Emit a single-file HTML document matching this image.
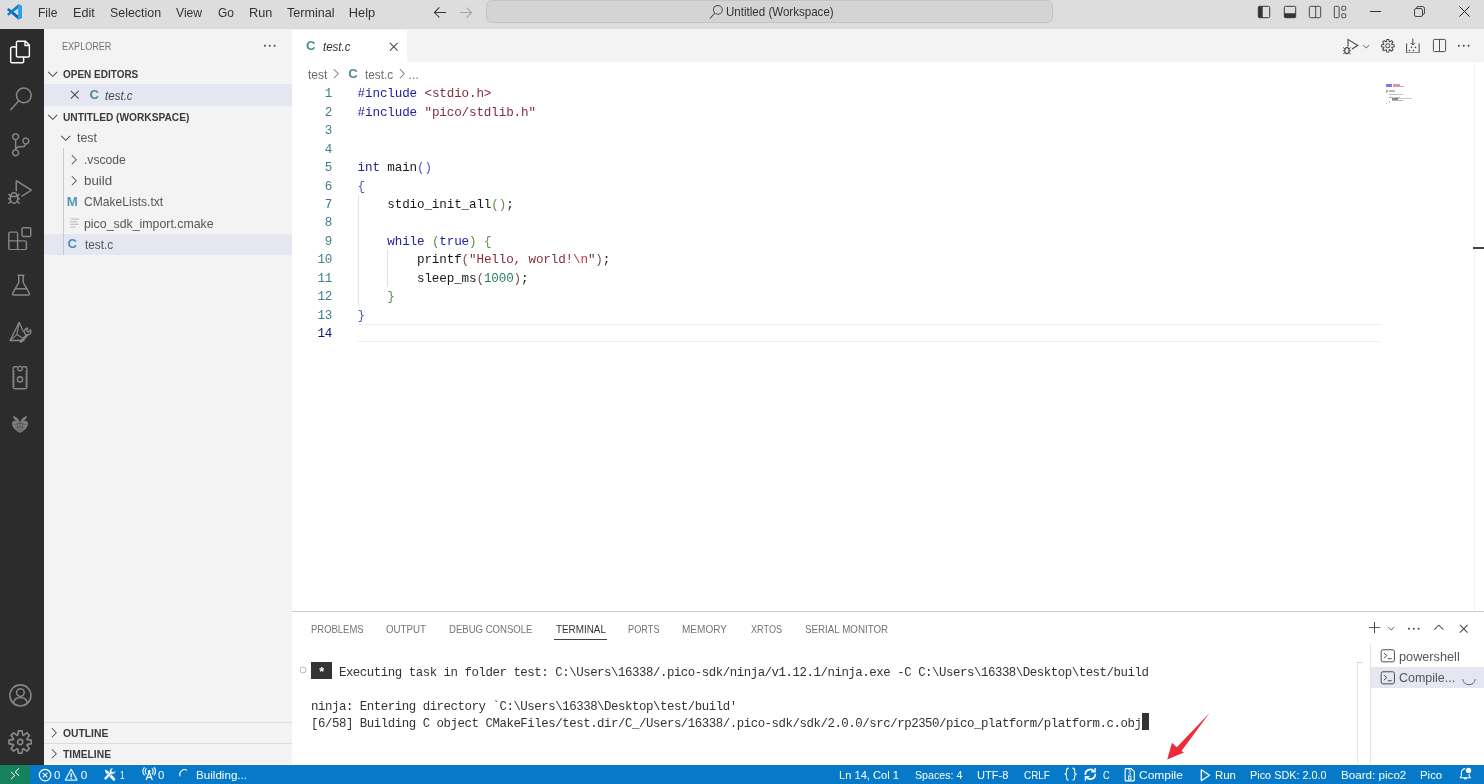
<!DOCTYPE html>
<html lang="en"><head><meta charset="utf-8"><title>test.c - Untitled (Workspace) - Visual Studio Code</title>
<style>

html,body{margin:0;padding:0;background:#fff;}
body{width:1484px;height:784px;overflow:hidden;font-family:'Liberation Sans',sans-serif;}
#app{position:relative;width:1484px;height:784px;overflow:hidden;background:#fff;filter:blur(0.35px);}
#app div,#app span,#app svg{position:absolute;}
.t{white-space:pre;line-height:1;transform-origin:0 50%;font-family:'Liberation Sans',sans-serif;}
.m{font-family:'Liberation Mono',monospace;}
.cl{white-space:pre;font-family:'Liberation Mono',monospace;font-size:12.6px;line-height:1;letter-spacing:-0.13px;color:#1a1a1a;left:357.6px;}
.cl span{position:static !important;}
.ln{white-space:pre;font-family:'Liberation Mono',monospace;font-size:12.6px;line-height:1;letter-spacing:-0.13px;color:#3d7f8c;text-align:right;width:30px;left:302.3px;}
.tl{white-space:pre;font-family:'Liberation Mono',monospace;font-size:12.4px;line-height:1;letter-spacing:-0.457px;color:#333;left:311px;}
.tl span{position:static !important;}
.k{color:#2420a2}.s{color:#842d3b}.e{color:#c8323c}.n{color:#2a7d5c}
.b1{color:#4858b8}.b2{color:#5a9048}.b3{color:#7a5240}

</style></head>
<body>
<div id="app">
<div style="left:0px;top:0px;width:1484px;height:29px;background:#dddddd;"></div>
<div style="left:486px;top:-0.3px;width:565px;height:21.6px;background:#d4d4d4;border:1px solid #c4c4c4;border-radius:6px;"></div>
<div style="left:0px;top:28.8px;width:43.5px;height:736px;background:#2c2c2c;"></div>
<div style="left:43.5px;top:29px;width:248.5px;height:735.4px;background:#f3f3f3;"></div>
<div style="left:44px;top:84.3px;width:248px;height:21.7px;background:#e4e6f1;"></div>
<div style="left:44px;top:233.8px;width:248px;height:21px;background:#e4e6f1;"></div>
<div style="left:63px;top:148px;width:1px;height:107px;background:#c9c9c9;"></div>
<div style="left:44px;top:722.3px;width:248px;height:1px;background:#dcdcdc;"></div>
<div style="left:44px;top:743.2px;width:248px;height:1px;background:#dcdcdc;"></div>
<div style="left:292px;top:29px;width:1192px;height:32.6px;background:#f3f3f3;"></div>
<div style="left:292px;top:29.6px;width:115.3px;height:32.4px;background:#ffffff;"></div>
<div style="left:1473.5px;top:62px;width:1px;height:549px;background:#f2f2f2;"></div>
<div style="left:1473px;top:247px;width:11px;height:2px;background:#424242;"></div>
<div style="left:358px;top:324px;width:1022px;height:1.2px;background:#eeeeee;"></div>
<div style="left:358px;top:340.6px;width:1022px;height:1.2px;background:#eeeeee;"></div>
<div style="left:358px;top:194.5px;width:1px;height:111px;background:#e2e2e2;"></div>
<div style="left:387.4px;top:250px;width:1px;height:37px;background:#e2e2e2;"></div>
<div style="left:292px;top:610.5px;width:1192px;height:1px;background:#cbcbcb;"></div>
<div style="left:554px;top:639px;width:53px;height:1px;background:#424242;"></div>
<div style="left:1369.5px;top:644px;width:1px;height:120.4px;background:#e3e3e3;"></div>
<div style="left:1370.5px;top:667px;width:113.5px;height:21px;background:#e4e6f1;"></div>
<div style="left:1356.5px;top:663px;width:1px;height:101.4px;background:#e9e9e9;"></div>
<div style="left:1357px;top:662px;width:5px;height:1px;background:#d0d0d0;"></div>
<div style="left:310.8px;top:661.9px;width:21.2px;height:16.9px;background:#333333;"></div>
<div style="left:1142px;top:713.3px;width:6.7px;height:17px;background:#333333;"></div>
<div style="left:0px;top:764.7px;width:1484px;height:19.3px;background:#0679c9;"></div>
<div style="left:0px;top:764.7px;width:30.2px;height:19.3px;background:#16825d;"></div>
<div class="ln" style="top:88.00px">1</div>
<div class="cl" style="top:88.00px"><span class="k">#include</span> <span class="s">&lt;stdio.h&gt;</span></div>
<div class="ln" style="top:107.00px">2</div>
<div class="cl" style="top:107.00px"><span class="k">#include</span> <span class="s">"pico/stdlib.h"</span></div>
<div class="ln" style="top:125.00px">3</div>
<div class="ln" style="top:144.00px">4</div>
<div class="ln" style="top:162.00px">5</div>
<div class="cl" style="top:162.00px"><span class="k">int</span> main<span class="b1">()</span></div>
<div class="ln" style="top:181.00px">6</div>
<div class="cl" style="top:181.00px"><span class="b1">{</span></div>
<div class="ln" style="top:199.00px">7</div>
<div class="cl" style="top:199.00px">    stdio_init_all<span class="b2">()</span>;</div>
<div class="ln" style="top:217.00px">8</div>
<div class="ln" style="top:236.00px">9</div>
<div class="cl" style="top:236.00px">    <span class="k">while</span> <span class="b2">(</span><span class="k">true</span><span class="b2">)</span> <span class="b2">{</span></div>
<div class="ln" style="top:254.00px">10</div>
<div class="cl" style="top:254.00px">        printf<span class="b3">(</span><span class="s">"Hello, world!</span><span class="e">\n</span><span class="s">"</span><span class="b3">)</span>;</div>
<div class="ln" style="top:273.00px">11</div>
<div class="cl" style="top:273.00px">        sleep_ms<span class="b3">(</span><span class="n">1000</span><span class="b3">)</span>;</div>
<div class="ln" style="top:291.00px">12</div>
<div class="cl" style="top:291.00px">    <span class="b2">}</span></div>
<div class="ln" style="top:310.00px">13</div>
<div class="cl" style="top:310.00px"><span class="b1">}</span></div>
<div class="ln" style="top:328.00px;color:#0b216f">14</div>
<div class="tl" style="top:667.00px"><span style="color:#fff;font-weight:700"> * </span> Executing task in folder test: C:\Users\16338/.pico-sdk/ninja/v1.12.1/ninja.exe -C C:\Users\16338\Desktop\test/build </div>
<div class="tl" style="top:701.00px">ninja: Entering directory `C:\Users\16338\Desktop\test/build'</div>
<div class="tl" style="top:718.00px">[6/58] Building C object CMakeFiles/test.dir/C_/Users/16338/.pico-sdk/sdk/2.0.0/src/rp2350/pico_platform/platform.c.obj</div>
<div style="left:1386px;top:84.1px;width:6px;height:2.9px;background:#5a5ae0;opacity:0.8"></div>
<div style="left:1393.4px;top:84.1px;width:6.6px;height:2.9px;background:#d06a80;opacity:0.7"></div>
<div style="left:1400.3px;top:85.6px;width:3.4px;height:1.2px;background:#999;opacity:0.7"></div>
<div style="left:1386px;top:90.44px;width:2.2px;height:1.3px;background:#666;opacity:0.55"></div>
<div style="left:1389px;top:90.44px;width:5.5px;height:1.3px;background:#777;opacity:0.5"></div>
<div style="left:1386px;top:92.0px;width:0.8px;height:1.3px;background:#777;opacity:0.5"></div>
<div style="left:1389.2px;top:93.56px;width:13.5px;height:1.2px;background:#888;opacity:0.5"></div>
<div style="left:1389.2px;top:96.68px;width:3.8px;height:1.2px;background:#6666cc;opacity:0.6"></div>
<div style="left:1393.7px;top:96.68px;width:6px;height:1.2px;background:#7a7ad0;opacity:0.55"></div>
<div style="left:1392.3px;top:98.24px;width:5.5px;height:1.4px;background:#555;opacity:0.7"></div>
<div style="left:1398px;top:98.24px;width:13.8px;height:1.2px;background:#8a7070;opacity:0.4"></div>
<div style="left:1392.3px;top:99.8px;width:11.2px;height:1.3px;background:#777;opacity:0.55"></div>
<div style="left:1389.2px;top:101.36px;width:0.8px;height:1.3px;background:#777;opacity:0.5"></div>
<div style="left:1386px;top:102.92px;width:0.8px;height:1.3px;background:#777;opacity:0.5"></div>
<svg style="left:5.5px;top:4px;" width="16.8" height="15.8" viewBox="0 0 100 100"><polygon points="13,26 76,75 76,100 3,37" fill="#0a6ab4"/><polygon points="13,74 76,25 76,0 3,63" fill="#1180cf"/><polygon points="74,0 100,12 100,88 74,100" fill="#2a9fea"/></svg>
<svg style="left:432px;top:3.8px;" width="16" height="16" viewBox="0 0 16 16"><path d="M7 3.093l-5 5V8.8l5 5 .707-.707-4.146-4.147H14v-1H3.56L7.707 3.8 7 3.093z" fill="#333"/></svg>
<svg style="left:458px;top:3.8px;" width="16" height="16" viewBox="0 0 16 16"><path d="M9 13.887l5-5V8.18l-5-5-.707.707 4.146 4.147H2v1h10.44L8.293 13.18l.707.707z" fill="#a4a4a4"/></svg>
<svg style="left:708.5px;top:4.5px;" width="14" height="14" viewBox="0 0 24 24"><path d="M15.25 0a8.25 8.25 0 0 0-6.18 13.72L1 22.88l1.12 1 8.05-9.12A8.251 8.251 0 1 0 15.25.01V0zm0 15a6.75 6.75 0 1 1 0-13.5 6.75 6.75 0 0 1 0 13.5z" fill="#444"/></svg>
<svg style="left:1257px;top:4.8px;" width="14" height="14" viewBox="0 0 16 16"><rect x="1.5" y="1.5" width="13" height="13" rx="1.5" fill="none" stroke="#333" stroke-width="1.1"/><path d="M1.5 3 a1.5 1.5 0 0 1 1.5-1.5 h3.5 v13 h-3.5 a1.5 1.5 0 0 1-1.5-1.5z" fill="#333"/></svg>
<svg style="left:1282.5px;top:4.8px;" width="14" height="14" viewBox="0 0 16 16"><rect x="1.5" y="1.5" width="13" height="13" rx="1.5" fill="none" stroke="#333" stroke-width="1.1"/><path d="M1.5 9.5 h13 v3.5 a1.5 1.5 0 0 1-1.5 1.5 h-10 a1.5 1.5 0 0 1-1.5-1.5z" fill="#333"/></svg>
<svg style="left:1307.7px;top:4.8px;" width="14" height="14" viewBox="0 0 16 16"><rect x="1.5" y="1.5" width="13" height="13" rx="1.5" fill="none" stroke="#444" stroke-width="1.1"/><path d="M8.8 1.5v13" stroke="#444" stroke-width="1.1"/></svg>
<svg style="left:1333.3px;top:4.8px;" width="14" height="14" viewBox="0 0 16 16"><rect x="1.5" y="1.5" width="5.5" height="13" rx="1" fill="none" stroke="#444" stroke-width="1.1"/><rect x="10" y="1.5" width="4.5" height="4.5" rx="1" fill="none" stroke="#444" stroke-width="1.1"/><rect x="10" y="10" width="4.5" height="4.5" rx="1" fill="none" stroke="#444" stroke-width="1.1"/></svg>
<div style="left:1370px;top:11px;width:10.6px;height:1px;background:#333"></div>
<svg style="left:1413.5px;top:6px;" width="11" height="11" viewBox="0 0 11 11"><rect x="0.5" y="2.5" width="8" height="8" rx="1.6" fill="none" stroke="#333" stroke-width="0.9"/><path d="M2.6 2.3 V2 a1.5 1.5 0 0 1 1.5-1.5 h4.4 a2 2 0 0 1 2 2 v4.4 a1.5 1.5 0 0 1-1.5 1.5 h-0.3" fill="none" stroke="#333" stroke-width="0.9"/></svg>
<svg style="left:1458.5px;top:6.3px;" width="11" height="11" viewBox="0 0 11 11"><path d="M0.4 0.4 L10.6 10.6 M10.6 0.4 L0.4 10.6" stroke="#222" stroke-width="1"/></svg>
<svg style="left:8.6px;top:40px;" width="23" height="24" viewBox="0 0 24 24"><path d="M17.5 0h-9L7 1.5V6H2.5L1 7.500v15.070L2.500 24h12.070L16 22.570V18h4.700l1.300-1.430V4.500L17.500 0zm0 2.120l2.380 2.380H17.500V2.120zm-3 20.380h-12v-15H7v9.070L8.500 18h6v4.500zm6-6h-12v-15H16V6h4.500v10.500z" fill="#ffffff"/></svg>
<svg style="left:8.6px;top:86.6px;" width="23.4" height="24" viewBox="0 0 24 24"><path d="M15.25 0a8.25 8.25 0 0 0-6.18 13.72L1 22.88l1.12 1 8.05-9.12A8.251 8.251 0 1 0 15.25.01V0zm0 15a6.75 6.75 0 1 1 0-13.5 6.75 6.75 0 0 1 0 13.5z" fill="#868686"/></svg>
<svg style="left:8.6px;top:133.3px;" width="23.4" height="23.4" viewBox="0 0 24 24"><path d="M21.007 8.222A3.738 3.738 0 0 0 15.045 5.200a3.737 3.737 0 0 0 1.156 6.583 2.988 2.988 0 0 1-2.668 1.670h-2.990a4.456 4.456 0 0 0-2.989 1.165V7.400a3.737 3.737 0 1 0-1.494 0v9.117a3.776 3.776 0 1 0 1.816.099 2.990 2.990 0 0 1 2.668-1.667h2.990a4.484 4.484 0 0 0 4.223-3.039 3.736 3.736 0 0 0 3.250-3.687zM4.565 3.738a2.242 2.242 0 1 1 4.484 0 2.242 2.242 0 0 1-4.484 0zm4.484 16.441a2.242 2.242 0 1 1-4.484 0 2.242 2.242 0 0 1 4.484 0zm8.221-9.715a2.242 2.242 0 1 1 0-4.485 2.242 2.242 0 0 1 0 4.485z" fill="#868686"/></svg>
<svg style="left:8.4px;top:180.2px;" width="24" height="24" viewBox="0 0 24 24"><path d="M10.940 13.500l-1.320 1.320a3.730 3.730 0 0 0-7.240 0L1.060 13.500 0 14.560l1.720 1.720-.220.220V18H0v1.500h1.500v.080c.077.489.214.966.410 1.420L0 22.940 1.060 24l1.650-1.650A4.308 4.308 0 0 0 6 24a4.310 4.310 0 0 0 3.290-1.650L10.940 24 12 22.940 10.090 21c.198-.464.336-.951.410-1.450v-.100H12V18h-1.500v-1.500l-.220-.220L12 14.560l-1.060-1.060zM6 13.500a2.250 2.250 0 0 1 2.250 2.250h-4.500A2.250 2.250 0 0 1 6 13.500zm3 6a3.330 3.330 0 0 1-3 3 3.330 3.330 0 0 1-3-3v-2.250h6v2.250zm14.760-9.900v1.260L13.500 17.370V15.600l8.500-5.370L9 2v9.460a5.070 5.070 0 0 0-1.500-.720V.630L8.640 0l15.120 9.600z" fill="#868686"/></svg>
<svg style="left:8.4px;top:227px;" width="23.6" height="23.4" viewBox="0 0 24 24"><path d="M13.500 1.500L15 0h7.500L24 1.500V9l-1.500 1.500H15L13.500 9V1.500zm1.500 0V9h7.500V1.500H15zM0 15V6l1.500-1.500H9L10.500 6v7.500H18l1.500 1.500v7.500L18 24H1.500L0 22.500V15zm9-1.500V6H1.500v7.500H9zM9 15H1.500v7.500H9V15zm1.500 7.500H18V15h-7.500v7.500z" fill="#868686"/></svg>
<svg style="left:8.8px;top:273.3px;" width="24" height="24" viewBox="0 0 24 24"><path d="M8.5 2.2h7M9.8 2.2v7.3L3.6 20.4a1 1 0 0 0 .9 1.5h15a1 1 0 0 0 .9-1.500L14.200 9.500V2.200" fill="none" stroke="#868686" stroke-width="1.5" stroke-linejoin="round"/><path d="M6.300 15.800h11.400" stroke="#868686" stroke-width="1.500"/></svg>
<svg style="left:8.2px;top:319.6px;" width="24.5" height="24" viewBox="0 0 24 24"><path d="M11 2.300L1.800 20.500h14.500" fill="none" stroke="#868686" stroke-width="1.400" stroke-linejoin="round"/><path d="M11 2.300l4.200 9.600M11 2.300L8.600 14.600 1.800 20.500M8.600 14.600l5.500 3.200" fill="none" stroke="#868686" stroke-width="1.200" stroke-linejoin="round"/><path d="M12.500 21.500l6.300-6.300" stroke="#868686" stroke-width="2.600" stroke-linecap="round"/><path d="M22.300 9.800a3.400 3.400 0 1 1-2.700-1.700l-1.300 2.500 1.800 1.500z" fill="none" stroke="#868686" stroke-width="1.300" stroke-linejoin="round"/></svg>
<svg style="left:8.1px;top:365.3px;" width="24" height="24.5" viewBox="0 0 24 24.500"><path d="M9.400 1.800H6.800a1.600 1.600 0 0 0-1.600 1.600v18.700a1.600 1.600 0 0 0 1.600 1.600h10.400a1.600 1.600 0 0 0 1.600-1.600V3.400a1.600 1.600 0 0 0-1.600-1.600h-2.600" fill="none" stroke="#868686" stroke-width="1.400"/><circle cx="12" cy="3.600" r="2.300" fill="none" stroke="#868686" stroke-width="1.300"/><circle cx="12" cy="14.400" r="2.600" fill="none" stroke="#868686" stroke-width="1.400"/><path d="M5.200 7h1.800M5.200 9.400h1.800M5.200 11.800h1.800M5.200 14.200h1.800M5.200 16.600h1.800M5.200 19h1.800M5.200 21.400h1.800M17 7h1.800M17 9.400h1.800M17 11.800h1.800M17 14.200h1.800M17 16.600h1.800M17 19h1.800M17 21.400h1.800" stroke="#868686" stroke-width="0.900"/></svg>
<svg style="left:8.1px;top:412px;" width="24" height="24" viewBox="0 0 24 24"><path d="M12 20.900C9 19.600 4.300 16.400 3.900 11.600 3.800 9.600 5.800 8.500 7.900 8.800 9.900 9.100 11 9.700 12 9.700s2.100-.600 4.100-.900c2.100-.300 4.100.800 4 2.800C19.700 16.400 15 19.600 12 20.900z" fill="#7e7e7e"/><path d="M11.700 9.600C10.700 7 8.300 4.600 5 4c.300 3 2.500 5.400 6.700 5.600zM12.300 9.600C13.300 7 15.700 4.600 19 4c-.300 3-2.500 5.400-6.700 5.600z" fill="#7e7e7e"/><path d="M6.500 12.500l5.500-1.200 5.500 1.200M7.500 15.800l4.500-1.200 4.500 1.200M12 10v10.500M9.200 11.500l.8 7.500M14.800 11.500l-.8 7.500" stroke="#2c2c2c" stroke-width="0.600" fill="none" opacity="0.650"/></svg>
<svg style="left:7.9px;top:682.8px;" width="24.8" height="24.8" viewBox="0 0 24 24"><circle cx="12" cy="12" r="10.200" fill="none" stroke="#868686" stroke-width="1.500"/><circle cx="12" cy="9.300" r="3.700" fill="none" stroke="#868686" stroke-width="1.500"/><path d="M5.300 19.600c.600-3.400 3.300-5.500 6.700-5.500s6.100 2.100 6.700 5.500" fill="none" stroke="#868686" stroke-width="1.500"/></svg>
<svg style="left:8px;top:729.5px;" width="24.4" height="24" viewBox="0 0 24 24"><path d="M19.850 8.750l4.150.830v4.840l-4.150.830 2.350 3.520-3.430 3.430-3.520-2.350-.830 4.150H9.580l-.830-4.150-3.520 2.350-3.430-3.430 2.350-3.520L0 14.420V9.580l4.150-.830L1.800 5.230 5.230 1.800l3.520 2.350L9.580 0h4.840l.830 4.150 3.520-2.350 3.430 3.430-2.350 3.520zm-1.570 5.070l4-.810v-2l-4-.810-.540-1.300 2.290-3.430-1.430-1.430-3.430 2.290-1.300-.540-.810-4h-2l-.810 4-1.300.540-3.430-2.290-1.430 1.430L6.380 8.900l-.540 1.300-4 .810v2l4 .810.540 1.300-2.290 3.430 1.430 1.430 3.430-2.290 1.300.540.810 4h2l.810-4 1.300-.540 3.430 2.290 1.430-1.430-2.290-3.430.540-1.300zm-8.186-4.672A3.430 3.430 0 0 1 12 8.570 3.440 3.440 0 0 1 15.430 12a3.430 3.430 0 1 1-5.336-2.852zm.956 4.274c.281.188.612.288.950.288A1.700 1.700 0 0 0 13.710 12a1.710 1.710 0 1 0-2.660 1.422z" fill="#868686"/></svg>
<svg style="left:261.7px;top:38.2px;" width="15.5" height="15.5" viewBox="0 0 16 16"><path d="M4 8a1 1 0 1 1-2 0 1 1 0 0 1 2 0zm5 0a1 1 0 1 1-2 0 1 1 0 0 1 2 0zm5 0a1 1 0 1 1-2 0 1 1 0 0 1 2 0z" fill="#424242"/></svg>
<svg style="left:45.4px;top:66.3px;" width="15.5" height="15.5" viewBox="0 0 16 16"><path d="M7.976 10.072l4.357-4.357.62.618L8.284 11h-.618L3 6.333l.619-.618 4.357 4.357z" fill="#424242"/></svg>
<svg style="left:45.4px;top:109px;" width="15.5" height="15.5" viewBox="0 0 16 16"><path d="M7.976 10.072l4.357-4.357.62.618L8.284 11h-.618L3 6.333l.619-.618 4.357 4.357z" fill="#424242"/></svg>
<svg style="left:58.2px;top:130.3px;" width="15.5" height="15.5" viewBox="0 0 16 16"><path d="M7.976 10.072l4.357-4.357.62.618L8.284 11h-.618L3 6.333l.619-.618 4.357 4.357z" fill="#424242"/></svg>
<svg style="left:66.2px;top:151.6px;" width="15.5" height="15.5" viewBox="0 0 16 16"><path d="M10.072 8.024L5.715 3.667l.618-.62L11 7.716v.618L6.333 13l-.618-.619 4.357-4.357z" fill="#424242"/></svg>
<svg style="left:66.2px;top:173px;" width="15.5" height="15.5" viewBox="0 0 16 16"><path d="M10.072 8.024L5.715 3.667l.618-.62L11 7.716v.618L6.333 13l-.618-.619 4.357-4.357z" fill="#424242"/></svg>
<svg style="left:45.6px;top:725px;" width="15.5" height="15.5" viewBox="0 0 16 16"><path d="M10.072 8.024L5.715 3.667l.618-.62L11 7.716v.618L6.333 13l-.618-.619 4.357-4.357z" fill="#424242"/></svg>
<svg style="left:45.6px;top:746.3px;" width="15.5" height="15.5" viewBox="0 0 16 16"><path d="M10.072 8.024L5.715 3.667l.618-.62L11 7.716v.618L6.333 13l-.618-.619 4.357-4.357z" fill="#424242"/></svg>
<svg style="left:66.8px;top:87.4px;" width="15.5" height="15.5" viewBox="0 0 16 16"><path d="M8 8.707l3.646 3.647.708-.707L8.707 8l3.647-3.646-.707-.708L8 7.293 4.354 3.646l-.707.708L7.293 8l-3.646 3.646.707.708L8 8.707z" fill="#424242"/></svg>
<svg style="left:385.7px;top:38.7px;" width="15.5" height="15.5" viewBox="0 0 16 16"><path d="M8 8.707l3.646 3.647.708-.707L8.707 8l3.647-3.646-.707-.708L8 7.293 4.354 3.646l-.707.708L7.293 8l-3.646 3.646.707.708L8 8.707z" fill="#424242"/></svg>
<svg style="left:327.8px;top:66.3px;" width="15.5" height="15.5" viewBox="0 0 16 16"><path d="M10.072 8.024L5.715 3.667l.618-.62L11 7.716v.618L6.333 13l-.618-.619 4.357-4.357z" fill="#6c6c6c"/></svg>
<svg style="left:393.5px;top:66.3px;" width="15.5" height="15.5" viewBox="0 0 16 16"><path d="M10.072 8.024L5.715 3.667l.618-.62L11 7.716v.618L6.333 13l-.618-.619 4.357-4.357z" fill="#6c6c6c"/></svg>
<svg style="left:69.5px;top:217.5px;" width="10" height="10" viewBox="0 0 10 10"><path d="M0.300 1h8.700M0.300 3.700h6.800M0.300 6.300h8.700M0.300 9h5.300" stroke="#b9b9b9" stroke-width="1.100"/></svg>
<svg style="left:1341.5px;top:37.5px;" width="17" height="17" viewBox="0 0 16 16"><path d="M5.650 8.300V1.300L14.800 7l-5.400 3.400" fill="none" stroke="#424242" stroke-width="1" stroke-linejoin="miter"/><ellipse cx="4.660" cy="11.800" rx="2.050" ry="2.900" fill="none" stroke="#424242" stroke-width="1"/><path d="M2.700 10.200L1.100 9M6.600 10.200l1.600-1.200M2.600 12H0.900M6.700 12h1.700M2.900 13.700l-1.700 1.300M6.400 13.700l1.700 1.300" stroke="#424242" stroke-width="0.900"/></svg>
<svg style="left:1360.7px;top:40.7px;" width="10.5" height="10.5" viewBox="0 0 16 16"><path d="M7.976 10.072l4.357-4.357.62.618L8.284 11h-.618L3 6.333l.619-.618 4.357 4.357z" fill="#555"/></svg>
<svg style="left:1380.4px;top:38.2px;" width="15.6" height="15.6" viewBox="0 0 16 16"><path d="M9.100 4.400L8.600 2H7.400l-.500 2.400-.700.300-2-1.300-.900.800 1.300 2-.200.700-2.400.500v1.200l2.400.500.300.800-1.300 2 .800.800 2-1.300.800.300.400 2.300h1.200l.500-2.400.800-.300 2 1.300.800-.800-1.300-2 .300-.800 2.300-.400V7.400l-2.400-.500-.300-.800 1.300-2-.800-.800-2 1.300-.700-.200zM9.400 1l.500 2.400L12 2.100l2 2-1.400 2.100 2.400.400v2.800l-2.400.500L14 12l-2 2-2.100-1.400-.500 2.400H6.600l-.500-2.400L4 13.900l-2-2 1.400-2.100L1 9.400V6.600l2.400-.500L2.100 4l2-2 2.100 1.400.400-2.400h2.800zm.600 7c0 1.100-.900 2-2 2s-2-.900-2-2 .900-2 2-2 2 .900 2 2zM8 9c.600 0 1-.400 1-1s-.400-1-1-1-1 .400-1 1 .400 1 1 1z" fill="#424242"/><circle cx="8" cy="8" r="2.100" fill="#f3f3f3" stroke="#424242" stroke-width="1"/></svg>
<svg style="left:1404.7px;top:37.6px;" width="15.6" height="15.6" viewBox="0 0 16 16"><path d="M1.650 5.600v9.700h12.800V5.600M8 0.600v6.600M5.700 4.900L8 7.200l2.300-2.300" fill="none" stroke="#424242" stroke-width="1"/><circle cx="6.700" cy="9.600" r="0.850" fill="#424242"/><circle cx="10.700" cy="9.600" r="0.850" fill="#424242"/><circle cx="4.600" cy="12.800" r="0.850" fill="#424242"/><circle cx="8.600" cy="12.800" r="0.850" fill="#424242"/></svg>
<svg style="left:1431.6px;top:38px;" width="15" height="15" viewBox="0 0 16 16"><rect x="1.500" y="1.500" width="13" height="13" rx="1.200" fill="none" stroke="#424242" stroke-width="1"/><path d="M8 1.500v13" stroke="#424242" stroke-width="1"/></svg>
<svg style="left:1456.2px;top:38.2px;" width="15.5" height="15.5" viewBox="0 0 16 16"><path d="M4 8a1 1 0 1 1-2 0 1 1 0 0 1 2 0zm5 0a1 1 0 1 1-2 0 1 1 0 0 1 2 0zm5 0a1 1 0 1 1-2 0 1 1 0 0 1 2 0z" fill="#424242"/></svg>
<span class="t" style="left:306px;top:39.3px;font-size:13.2px;font-weight:700;color:#4f8d96">C</span>
<span class="t" style="left:348.2px;top:67.3px;font-size:13.2px;font-weight:700;color:#4f8d96">C</span>
<span class="t" style="left:89.4px;top:87.7px;font-size:13.2px;font-weight:700;color:#4f8d96">C</span>
<span class="t" style="left:67.5px;top:237.3px;font-size:13.2px;font-weight:700;color:#4f8fb3">C</span>
<span class="t" style="left:66.7px;top:194.7px;font-size:13.2px;font-weight:700;color:#4f9ab8">M</span>
<svg style="left:1368.4px;top:621.2px;" width="14" height="14" viewBox="0 0 16 16"><path d="M14 7v1H8v6H7V8H1V7h6V1h1v6h6z" fill="#333"/></svg>
<svg style="left:1385.8px;top:623.3px;" width="10.5" height="10.5" viewBox="0 0 16 16"><path d="M7.976 10.072l4.357-4.357.62.618L8.284 11h-.618L3 6.333l.619-.618 4.357 4.357z" fill="#555"/></svg>
<svg style="left:1405.9px;top:620.7px;" width="15.5" height="15.5" viewBox="0 0 16 16"><path d="M4 8a1 1 0 1 1-2 0 1 1 0 0 1 2 0zm5 0a1 1 0 1 1-2 0 1 1 0 0 1 2 0zm5 0a1 1 0 1 1-2 0 1 1 0 0 1 2 0z" fill="#424242"/></svg>
<svg style="left:1430.9px;top:620.2px;" width="15.5" height="15.5" viewBox="0 0 16 16"><path d="M8.024 5.928l-4.357 4.357-.62-.618L7.716 5h.618L13 9.667l-.619.618-4.357-4.357z" fill="#424242"/></svg>
<svg style="left:1456px;top:620.6px;" width="15.5" height="15.5" viewBox="0 0 16 16"><path d="M8 8.707l3.646 3.647.708-.707L8.707 8l3.647-3.646-.707-.708L8 7.293 4.354 3.646l-.707.708L7.293 8l-3.646 3.646.707.708L8 8.707z" fill="#424242"/></svg>
<svg style="left:1380px;top:648.3px;" width="15.6" height="15.6" viewBox="0 0 16 16"><rect x="1.200" y="1.800" width="13.600" height="12.400" rx="1.800" fill="none" stroke="#4a4a4a" stroke-width="1"/><path d="M4 5.200l3 2.600-3 2.600M8 11h4" fill="none" stroke="#4a4a4a" stroke-width="1"/></svg>
<svg style="left:1380px;top:669.8px;" width="15.6" height="15.6" viewBox="0 0 16 16"><rect x="1.200" y="1.800" width="13.600" height="12.400" rx="1.800" fill="none" stroke="#4a4a4a" stroke-width="1"/><path d="M4 5.200l3 2.600-3 2.600M8 11h4" fill="none" stroke="#4a4a4a" stroke-width="1"/></svg>
<svg style="left:1461px;top:671px;" width="16" height="16" viewBox="0 0 16 16"><path d="M1.800 8.500a6.300 6.300 0 0 0 12.400 0" fill="none" stroke="#666" stroke-width="1" stroke-linecap="round"/></svg>
<svg style="left:298.5px;top:666px;" width="8" height="8" viewBox="0 0 8 8"><circle cx="4" cy="4" r="3" fill="none" stroke="#b8b8b8" stroke-width="1"/></svg>
<svg style="left:1160px;top:705px;" width="60" height="60" viewBox="0 0 60 60"><polygon points="7.200,54.500 12,37.800 16.800,42.200 49.500,8 21.500,46 24,47.600" fill="#ee2b3a"/></svg>
<svg style="left:7.5px;top:767px;" width="14" height="14" viewBox="0 0 16 16"><path d="M12.904 9.570L8.928 5.596l3.976-3.976-.619-.620L8 5.286v.619l4.285 4.285.619-.620zM3 5.620l4.072 4.050L3 13.745l.619.619L8 9.980v-.620L3.619 5 3 5.620z" fill="#ffffff"/></svg>
<svg style="left:37.6px;top:768px;" width="14.2" height="14.2" viewBox="0 0 16 16"><circle cx="8" cy="8" r="6.500" fill="none" stroke="#fff" stroke-width="1.350"/><path d="M5.400 5.400l5.200 5.200M10.600 5.400l-5.200 5.200" stroke="#fff" stroke-width="1.300"/></svg>
<svg style="left:64px;top:767.8px;" width="14.4" height="14.4" viewBox="0 0 16 16"><path d="M7.560 1h.880l6.540 12.260-.440.740H1.440L1 13.260 7.560 1zM8 2.280L2.280 13H13.700L8 2.280zM8.625 12v-1h-1.250v1h1.250zm-1.250-2V6h1.250v4h-1.250z" fill="#fff" stroke="#fff" stroke-width="0.350"/></svg>
<svg style="left:102.8px;top:767.6px;" width="14.2" height="14.2" viewBox="0 0 16 16"><path d="M2 1.800l3.200 1.200 8.200 8.600a1.600 1.600 0 0 1-2.300 2.300L2.900 5.200z" fill="#fff"/><path d="M14 2.500a3.500 3.500 0 0 1-4.500 4.300L4.300 12.800a1.700 1.700 0 0 1-2.500-2.400L7.400 4.800a3.500 3.500 0 0 1 4.300-4.500L9.800 2.500l.5 1.700 1.700.400z" fill="#fff" stroke="#0679c9" stroke-width="0.700"/></svg>
<svg style="left:141.8px;top:767.3px;" width="14.4" height="14.4" viewBox="0 0 16 16"><path d="M8 5.500L4.500 14.500M8 5.500l3.500 9M5.800 11.500h4.400" stroke="#fff" stroke-width="1.350" fill="none"/><circle cx="8" cy="4.800" r="1.400" fill="#fff"/><path d="M5 1.500a4.500 4.500 0 0 0 0 6.600M11 1.500a4.500 4.500 0 0 1 0 6.600M2.800 0.300a7 7 0 0 0 0 9M13.200 0.300a7 7 0 0 1 0 9" stroke="#fff" stroke-width="1.250" fill="none"/></svg>
<svg style="left:178.3px;top:767.8px;" width="13.5" height="13.5" viewBox="0 0 16 16"><path d="M2.200 9.500A6 6 0 0 1 10.500 2.500" fill="none" stroke="#fff" stroke-width="1.200" stroke-linecap="round"/></svg>
<svg style="left:1082.5px;top:767px;" width="14.6" height="14.6" viewBox="0 0 16 16"><path d="M2.600 8.600a5.400 5.400 0 0 1 9.500-4M13.400 7.400a5.400 5.400 0 0 1-9.500 4" fill="none" stroke="#fff" stroke-width="1.900"/><path d="M13.300 1v4.300H9M2.700 15v-4.300H7" fill="none" stroke="#fff" stroke-width="1.500"/></svg>
<svg style="left:1063.6px;top:767.2px;" width="13.2" height="14" viewBox="0 0 14 15"><path d="M5 1.200c-1.800 0-2.300.700-2.300 2.200v2.200c0 1-.400 1.600-1.500 1.700v.600c1.100.100 1.500.700 1.500 1.700v2.200c0 1.500.500 2.200 2.300 2.200" fill="none" stroke="#fff" stroke-width="1.100"/><path d="M9 1.200c1.800 0 2.300.700 2.300 2.200v2.200c0 1 .400 1.600 1.500 1.700v.600c-1.100.100-1.500.700-1.500 1.700v2.200c0 1.500-.500 2.200-2.300 2.200" fill="none" stroke="#fff" stroke-width="1.100"/></svg>
<svg style="left:1123.1px;top:768.1px;" width="13.5" height="13.5" viewBox="0 0 16 16"><path d="M2.600 1.600a.900.900 0 0 1 .900-.900h6.200l3.700 3.700v10a.900.900 0 0 1-.900.900h-9a.900.900 0 0 1-.900-.900z" fill="none" stroke="#fff" stroke-width="1.350" stroke-linejoin="round"/><path d="M7.300 1.200v1.600M8.700 2.800v1.600M7.300 4.400v1.600M8.700 6v1.600M7.300 7.600v1.400" stroke="#fff" stroke-width="1.300"/><rect x="6.600" y="9.600" width="2.800" height="3.800" fill="none" stroke="#fff" stroke-width="1.100"/></svg>
<svg style="left:1197.6px;top:767.6px;" width="14.6" height="14.6" viewBox="0 0 16 16"><path d="M3.600 2l9 6-9 6z" fill="none" stroke="#fff" stroke-width="1.400" stroke-linejoin="round"/></svg>
<svg style="left:1458.2px;top:767.2px;" width="14.6" height="14.6" viewBox="0 0 16 16"><path d="M8 1.800a4.300 4.300 0 0 0-4.300 4.300v3.500L2.500 11.800h11L12.300 9.600V7.500" fill="none" stroke="#fff" stroke-width="1.200" stroke-linejoin="round"/><path d="M6.500 12a1.600 1.600 0 0 0 3 0" fill="none" stroke="#fff" stroke-width="1.200"/><circle cx="11.600" cy="3.800" r="2.900" fill="#fff"/></svg>
<span class="t" style="left:38.46px;top:7px;font-size:12.8px;color:#333333;transform:scaleX(0.9421);">File</span>
<span class="t" style="left:72.51px;top:7px;font-size:12.8px;color:#333333;transform:scaleX(0.9857);">Edit</span>
<span class="t" style="left:109.51px;top:7px;font-size:12.8px;color:#333333;transform:scaleX(0.9701);">Selection</span>
<span class="t" style="left:176.00px;top:7px;font-size:12.8px;color:#333333;transform:scaleX(0.9504);">View</span>
<span class="t" style="left:217.74px;top:7px;font-size:12.8px;color:#333333;transform:scaleX(0.9338);">Go</span>
<span class="t" style="left:248.51px;top:7px;font-size:12.8px;color:#333333;transform:scaleX(0.9925);">Run</span>
<span class="t" style="left:286.80px;top:7px;font-size:12.8px;color:#333333;transform:scaleX(0.9847);">Terminal</span>
<span class="t" style="left:348.80px;top:7px;font-size:12.8px;color:#333333;">Help</span>
<span class="t" style="left:726.35px;top:6px;font-size:12.2px;color:#333333;transform:scaleX(0.9481);">Untitled (Workspace)</span>
<span class="t" style="left:62.46px;top:41px;font-size:11px;color:#707070;transform:scaleX(0.8247);">EXPLORER</span>
<span class="t" style="left:62.84px;top:69px;font-size:11px;color:#3b3b3b;transform:scaleX(0.9077);font-weight:700;">OPEN EDITORS</span>
<span class="t" style="left:105.35px;top:90px;font-size:12.8px;color:#4a4a4a;transform:scaleX(0.9037);font-style:italic;">test.c</span>
<span class="t" style="left:62.65px;top:112px;font-size:11px;color:#3b3b3b;transform:scaleX(0.9247);font-weight:700;">UNTITLED (WORKSPACE)</span>
<span class="t" style="left:77.10px;top:132px;font-size:12.8px;color:#565656;transform:scaleX(0.9670);">test</span>
<span class="t" style="left:84.26px;top:154px;font-size:12.8px;color:#565656;transform:scaleX(0.9437);">.vscode</span>
<span class="t" style="left:84.17px;top:175px;font-size:12.8px;color:#565656;transform:scaleX(1.0423);">build</span>
<span class="t" style="left:84.33px;top:196px;font-size:12.8px;color:#565656;transform:scaleX(0.9439);">CMakeLists.txt</span>
<span class="t" style="left:84.23px;top:218px;font-size:12.8px;color:#565656;transform:scaleX(0.9644);">pico_sdk_import.cmake</span>
<span class="t" style="left:84.81px;top:239px;font-size:12.8px;color:#565656;transform:scaleX(0.9209);">test.c</span>
<span class="t" style="left:63.02px;top:728px;font-size:11px;color:#3b3b3b;transform:scaleX(0.9382);font-weight:700;">OUTLINE</span>
<span class="t" style="left:63.31px;top:749px;font-size:11px;color:#3b3b3b;transform:scaleX(0.9353);font-weight:700;">TIMELINE</span>
<span class="t" style="left:322.75px;top:41px;font-size:12.8px;color:#333333;transform:scaleX(0.9004);font-style:italic;">test.c</span>
<span class="t" style="left:308.11px;top:69px;font-size:12.8px;color:#6c6c6c;transform:scaleX(0.9377);">test</span>
<span class="t" style="left:365.11px;top:69px;font-size:12.8px;color:#6c6c6c;transform:scaleX(0.9209);">test.c</span>
<span class="t" style="left:407.92px;top:69px;font-size:12.8px;color:#6c6c6c;transform:scaleX(0.8723);">…</span>
<span class="t" style="left:310.72px;top:624px;font-size:11px;color:#747474;transform:scaleX(0.8613);">PROBLEMS</span>
<span class="t" style="left:386.16px;top:624px;font-size:11px;color:#747474;transform:scaleX(0.8854);">OUTPUT</span>
<span class="t" style="left:448.92px;top:624px;font-size:11px;color:#747474;transform:scaleX(0.8697);">DEBUG CONSOLE</span>
<span class="t" style="left:555.82px;top:624px;font-size:11px;color:#333333;transform:scaleX(0.8966);">TERMINAL</span>
<span class="t" style="left:628.24px;top:624px;font-size:11px;color:#747474;transform:scaleX(0.8389);">PORTS</span>
<span class="t" style="left:682.48px;top:624px;font-size:11px;color:#747474;transform:scaleX(0.9135);">MEMORY</span>
<span class="t" style="left:750.83px;top:624px;font-size:11px;color:#747474;transform:scaleX(0.8275);">XRTOS</span>
<span class="t" style="left:804.86px;top:624px;font-size:11px;color:#747474;transform:scaleX(0.8894);">SERIAL MONITOR</span>
<span class="t" style="left:1399.01px;top:651px;font-size:12.8px;color:#565656;transform:scaleX(0.9925);">powershell</span>
<span class="t" style="left:1399.21px;top:672px;font-size:12.8px;color:#565656;transform:scaleX(0.9756);">Compile...</span>
<span class="t" style="left:54.41px;top:770px;font-size:11.8px;color:#ffffff;transform:scaleX(0.9655);">0</span>
<span class="t" style="left:80.80px;top:770px;font-size:11.8px;color:#ffffff;">0</span>
<span class="t" style="left:119.85px;top:770px;font-size:11.8px;color:#ffffff;transform:scaleX(0.6923);">1</span>
<span class="t" style="left:158.01px;top:770px;font-size:11.8px;color:#ffffff;transform:scaleX(0.9655);">0</span>
<span class="t" style="left:195.91px;top:770px;font-size:11.8px;color:#ffffff;transform:scaleX(0.9851);">Building...</span>
<span class="t" style="left:839.45px;top:770px;font-size:11.8px;color:#ffffff;transform:scaleX(0.9442);">Ln 14, Col 1</span>
<span class="t" style="left:915.35px;top:770px;font-size:11.8px;color:#ffffff;transform:scaleX(0.9030);">Spaces: 4</span>
<span class="t" style="left:977.36px;top:770px;font-size:11.8px;color:#ffffff;transform:scaleX(0.9387);">UTF-8</span>
<span class="t" style="left:1023.50px;top:770px;font-size:11.8px;color:#ffffff;transform:scaleX(0.8388);">CRLF</span>
<span class="t" style="left:1102.54px;top:770px;font-size:11.8px;color:#ffffff;transform:scaleX(0.7733);">C</span>
<span class="t" style="left:1139.19px;top:770px;font-size:11.8px;color:#ffffff;transform:scaleX(1.0138);">Compile</span>
<span class="t" style="left:1214.53px;top:770px;font-size:11.8px;color:#ffffff;transform:scaleX(0.9658);">Run</span>
<span class="t" style="left:1249.87px;top:770px;font-size:11.8px;color:#ffffff;transform:scaleX(0.9203);">Pico SDK: 2.0.0</span>
<span class="t" style="left:1340.61px;top:770px;font-size:11.8px;color:#ffffff;transform:scaleX(0.9862);">Board: pico2</span>
<span class="t" style="left:1420.43px;top:770px;font-size:11.8px;color:#ffffff;transform:scaleX(0.9679);">Pico</span>
</div>
</body></html>
